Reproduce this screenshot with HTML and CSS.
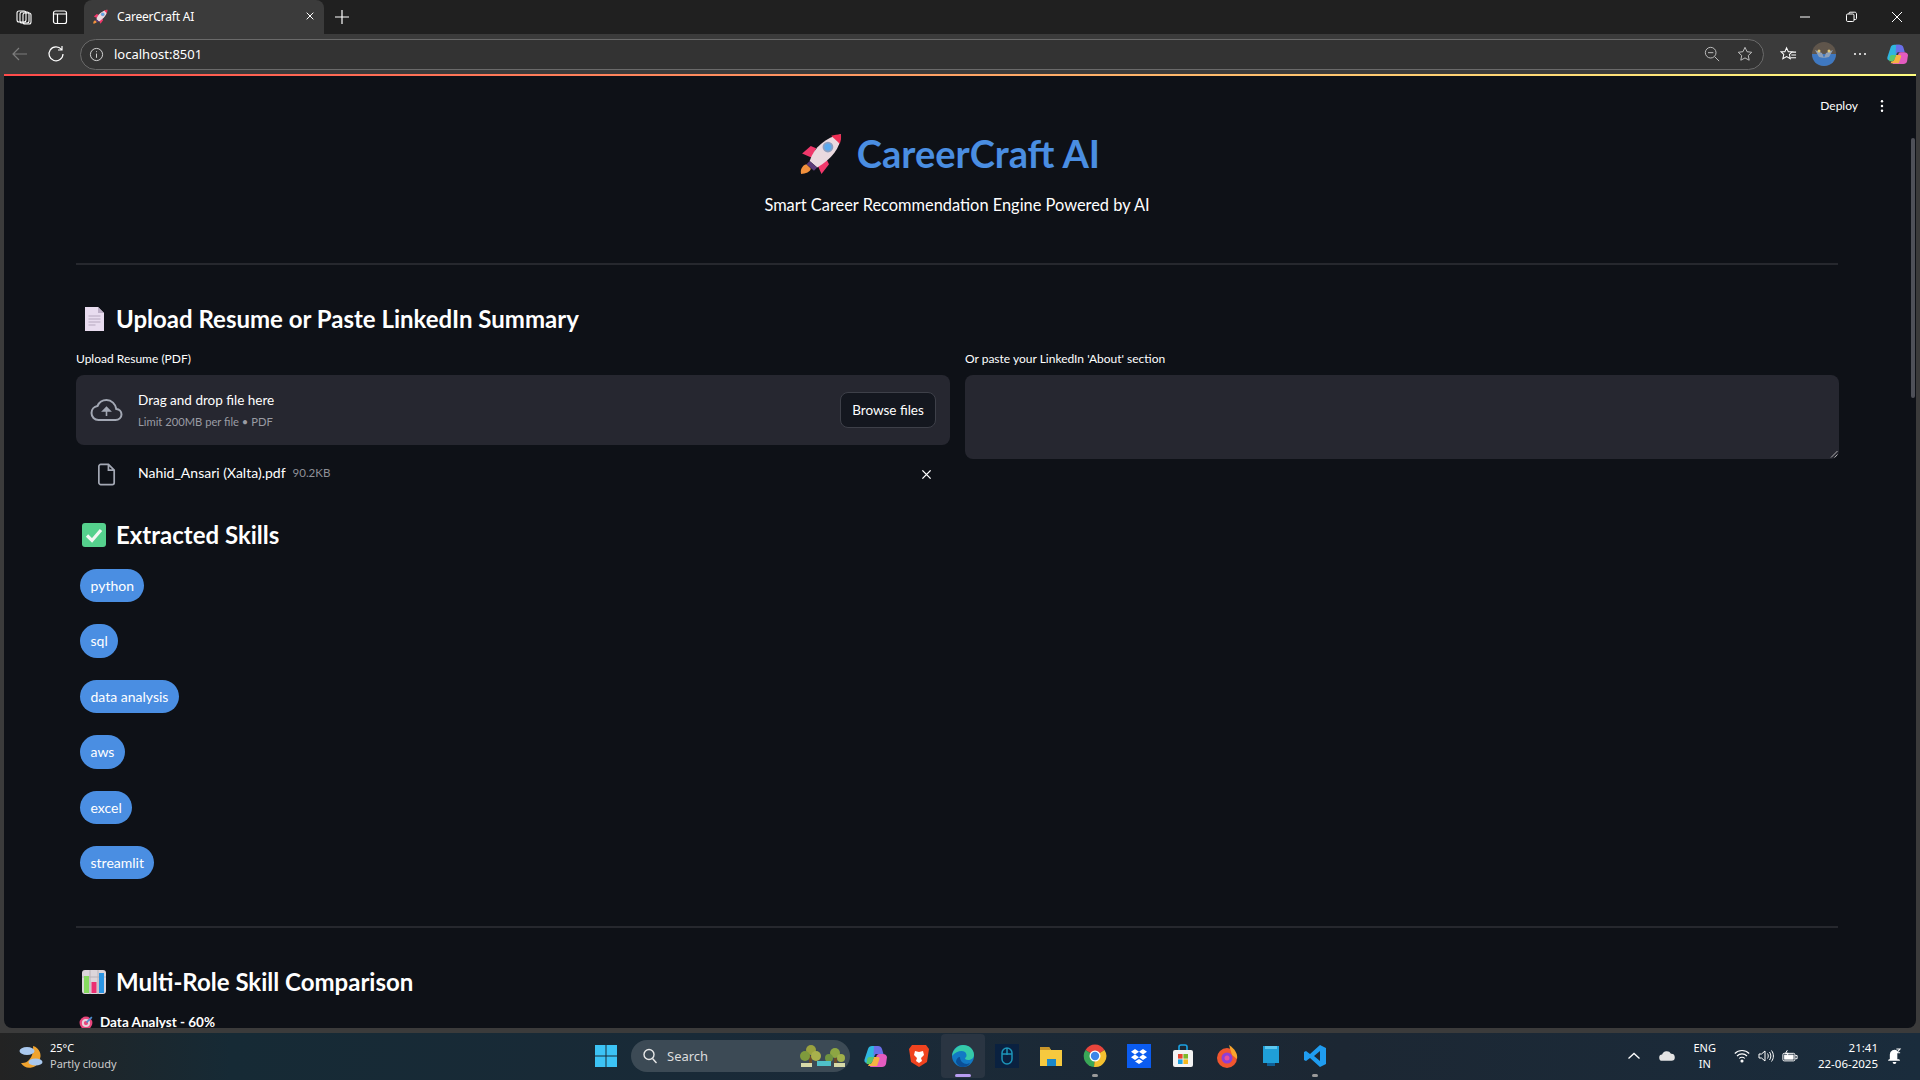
FILE: index.html
```html
<!DOCTYPE html>
<html lang="en">
<head>
  <meta charset="UTF-8" />
  <title>CareerCraft AI</title>
  <link rel="stylesheet" href="styles.css">
</head>
<body>
  <svg class="defs" width="0" height="0">
    <defs>
      <symbol id="rocket" viewBox="0 0 40 40">
        <path d="M1 39c-1-4 1-8 5-9l4 4c0 3-5 5-9 5z" fill="#f2913d"/>
        <path d="M10 13L2 20l9 4 4-9z" fill="#f0386b"/>
        <path d="M27 30l-7 9-5-11 9-4z" fill="#f0386b"/>
        <path d="M9 27C13 14 24 5 38 2c0 13-9 23-22 31z" fill="#ead9df"/>
        <path d="M29 3.500c3-1 6-1.500 9-1.500 .5 3 0 6-1 9z" fill="#ef2f55"/>
        <path d="M9 27l7 6-3 3-7-6z" fill="#5b3a78"/>
        <circle cx="26" cy="14" r="5" fill="#8d9fc0"/>
        <circle cx="26" cy="14" r="3.300" fill="#5aa9ee"/>
      </symbol>
    </defs>
  </svg>

  <div class="tabstrip">
    <div class="strip-left">
      <svg class="chrome-icon" viewBox="0 0 18 18" fill="none" stroke="#fff" stroke-width="1.1"><rect x="2" y="3" width="9" height="11" rx="2"/><rect x="5" y="4" width="9" height="11" rx="2"/><rect x="8" y="5" width="8" height="11" rx="2"/></svg>
      <svg class="chrome-icon" viewBox="0 0 18 18" fill="none" stroke="#fff" stroke-width="1.2"><rect x="2.500" y="3" width="13" height="12.500" rx="2"/><path d="M2.500 6h13M6.500 6v9.500"/></svg>
    </div>
    <div class="tab">
      <svg class="tab-favicon"><use href="#rocket"/></svg>
      <span class="tab-title">CareerCraft AI</span>
      <svg class="tab-close" viewBox="0 0 12 12" stroke="#fff" stroke-width="1.2"><path d="M2 2l8 8M10 2l-8 8"/></svg>
    </div>
    <svg class="new-tab" viewBox="0 0 14 14" stroke="#fff" stroke-width="1.2"><path d="M7 0v14M0 7h14"/></svg>
    <div class="window-btns">
      <svg viewBox="0 0 12 12" stroke="#fff" stroke-width="1"><path d="M1 6h10"/></svg>
      <svg viewBox="0 0 12 12" fill="none" stroke="#fff" stroke-width="1"><rect x="1.500" y="3" width="7.500" height="7.500" rx="1.200"/><path d="M4 3V2.200c0-.6.4-1 1-1h4.800c1 0 1.700.7 1.700 1.700V7.500c0 .6-.4 1-1 1H9"/></svg>
      <svg viewBox="0 0 12 12" stroke="#fff" stroke-width="1"><path d="M1 1l10 10M11 1L1 11"/></svg>
    </div>
  </div>

  <div class="toolbar">
    <svg class="nav-icon" viewBox="0 0 18 18" fill="none" stroke="#7d7d7d" stroke-width="1.200"><path d="M16 9H2M8 3L2 9l6 6"/></svg>
    <svg class="nav-icon" viewBox="0 0 18 18" fill="none" stroke="#fff" stroke-width="1.200"><path d="M14.500 4.500A7 7 0 1 0 16 9M15 1v4h-4"/></svg>
    <div class="address">
      <svg class="addr-info" viewBox="0 0 16 16" fill="none" stroke="#ddd" stroke-width="1"><circle cx="8" cy="8" r="6.500"/><path d="M8 7v4.500M8 4.500v1"/></svg>
      <span class="addr-url">localhost:8501</span>
      <svg class="addr-icon" viewBox="0 0 18 18" fill="none" stroke="#bdbdbd" stroke-width="1.100"><circle cx="7.500" cy="7.500" r="6"/><path d="M4.500 7.500h6M12 12l5 5"/></svg>
      <svg class="addr-icon" viewBox="0 0 18 18" fill="none" stroke="#bdbdbd" stroke-width="1.100"><path d="M9 1.500l2.300 4.900 5.300.7-3.900 3.600 1 5.300L9 13.400 4.300 16l1-5.300L1.400 7.100l5.300-.7z"/></svg>
    </div>
    <div class="toolbar-right">
      <svg class="tool-fav" viewBox="0 0 18 18" fill="none" stroke="#fff" stroke-width="1.100"><path d="M7 2l1.800 4h4.200L10 9l.9 4.500L7 11.200l-4 2.300L4 9 1 6h4.200zM13 6.500h4M12 9.500h5M11.500 12.500h5.500"/></svg>
      <svg class="avatar" viewBox="0 0 24 24"><circle cx="12" cy="12" r="12" fill="#5f554b"/><path d="M0 12h24c0 7-5 12-12 12S0 19 0 12z" fill="#3f78c0"/><path d="M3 8l7 3 2 5 2-5 7-3-4 7-5 1-5-1z" fill="#8e9fb5"/><circle cx="7" cy="9" r="1.500" fill="#e2c878"/><circle cx="17" cy="9" r="1.500" fill="#e2c878"/></svg>
      <svg class="tool-more" viewBox="0 0 14 4" fill="#fff"><circle cx="2" cy="2" r="1"/><circle cx="7" cy="2" r="1"/><circle cx="12" cy="2" r="1"/></svg>
      <svg class="tool-copilot" viewBox="0 0 24 24"><path d="M9 2h6l-5 14c-.7 2-2 3-4 3H4c-2 0-3-1.500-2.500-3.500L5 5c.5-2 2-3 4-3z" fill="#2fb6e0"/><path d="M11 2h4c2 0 3.500 1 4 3l1.500 5h-7c-1.500 0-2.500 1-3 2.500z" fill="#6a6fe8"/><path d="M8 20c2 0 3-1 3.500-2.500l2-5.500c.4-1 1-2 2.500-2H20c2 0 3.500 1 4 3l-1 7c-.5 2-2 3-4 3H7z" fill="#e45bc0"/><path d="M5 22h9l2.500-7c.4-1.200-.3-2-1.500-2H11l-2 5c-.6 1.500-1.500 2-3 2z" fill="#f5b342"/><path d="M4 16c0-1.500 1-3 2.500-3H11l-2 5c-.6 1.500-1.500 2-3 2H3.500z" fill="#59c96b"/></svg>
    </div>
  </div>

  <main class="app">
    <div class="top-gradient"></div>
    <div class="deploy-bar">
      <span class="deploy">Deploy</span>
      <svg class="kebab" viewBox="0 0 4 16" fill="#fff"><circle cx="2" cy="2.500" r="1.400"/><circle cx="2" cy="8" r="1.400"/><circle cx="2" cy="13.500" r="1.400"/></svg>
    </div>
    <div class="scrollbar"></div>

    <div class="content">
      <div class="hero">
        <h1 class="title">
          <svg class="title-rocket"><use href="#rocket"/></svg>
          <span>CareerCraft AI</span>
        </h1>
        <p class="subtitle">Smart Career Recommendation Engine Powered by AI</p>
      </div>
      <hr class="rule rule-first">

      <h2 class="heading heading-upload">
        <svg class="heading-icon" viewBox="0 0 26 26"><path d="M4 1h13l6 6v18H4z" fill="#e8dcef"/><path d="M17 1l6 6h-6z" fill="#bcaec6"/><path d="M7.500 10h12M7.500 13h12M7.500 16h12M7.500 19h7" stroke="#b5a8bf" stroke-width="1.200"/></svg>
        Upload Resume or Paste LinkedIn Summary
      </h2>

      <div class="columns">
        <div class="col">
          <label class="field-label">Upload Resume (PDF)</label>
          <div class="dropzone">
            <svg class="cloud" viewBox="0 0 32 24" fill="none" stroke="#a3a8b4" stroke-width="2"><path d="M8 22h17c3.500 0 6-2.500 6-5.500 0-3-2.300-5.300-5.200-5.500C25 6 21 2 16 2c-4 0-7.500 2.500-9 6C3.500 8.500 1 11.500 1 15c0 4 3 7 7 7z"/><path d="M16 18v-7M12.500 13l3.500-3.500 3.500 3.500z" fill="#a3a8b4" stroke-width="1.600"/></svg>
            <div class="drop-text">
              <div class="drop-title">Drag and drop file here</div>
              <div class="drop-hint">Limit 200MB per file • PDF</div>
            </div>
            <button class="browse">Browse files</button>
          </div>
          <div class="file-row">
            <svg class="file-icon" viewBox="0 0 18 24" fill="none" stroke="#a3a8b4" stroke-width="1.800"><path d="M2.500 1.500h8l6 6v13c0 1-.8 2-2 2h-12c-1 0-2-1-2-2V3.500c0-1 1-2 2-2zM10.500 1.500v6h6"/></svg>
            <span class="file-name">Nahid_Ansari (Xalta).pdf</span>
            <span class="file-size">90.2KB</span>
            <svg class="file-remove" viewBox="0 0 12 12" stroke="#fff" stroke-width="1.500"><path d="M1.500 1.500l9 9M10.500 1.500l-9 9"/></svg>
          </div>
        </div>
        <div class="col">
          <label class="field-label">Or paste your LinkedIn 'About' section</label>
          <div class="textarea">
            <svg class="grip" viewBox="0 0 8 8" stroke="#aaa" stroke-width="1"><path d="M7.500 1L1 7.500M7.500 4.500L4.500 7.500"/></svg>
          </div>
        </div>
      </div>

      <h2 class="heading heading-skills">
        <svg class="heading-icon" viewBox="0 0 26 26"><rect x="1" y="1" width="24" height="24" rx="3" fill="#55d18d"/><path d="M6 13.500l5 5L20 8" fill="none" stroke="#f2f7f3" stroke-width="3.200"/></svg>
        Extracted Skills
      </h2>
      <div class="skills">
        <div><span class="pill">python</span></div>
        <div><span class="pill">sql</span></div>
        <div><span class="pill">data analysis</span></div>
        <div><span class="pill">aws</span></div>
        <div><span class="pill">excel</span></div>
        <div><span class="pill">streamlit</span></div>
      </div>
      <hr class="rule rule-second">

      <h2 class="heading heading-compare">
        <svg class="heading-icon" viewBox="0 0 26 26"><rect x="1" y="1" width="24" height="24" rx="3" fill="#dcd5da"/><path d="M9 1v24M17 1v24M1 8h24" stroke="#b9b2b8" stroke-width="1"/><rect x="3" y="7" width="5" height="17" fill="#86d95f"/><rect x="10.500" y="13" width="5" height="11" fill="#ec2f72"/><rect x="18" y="4" width="5" height="20" fill="#2b95e3"/></svg>
        Multi-Role Skill Comparison
      </h2>
      <div class="role-line">
        <svg class="role-icon" viewBox="0 0 14 14"><circle cx="6.500" cy="7.500" r="6" fill="#e8467c"/><circle cx="6.500" cy="7.500" r="3.800" fill="#e7d5dc"/><circle cx="6.500" cy="7.500" r="2" fill="#e8467c"/><path d="M7 7l5-5" stroke="#4b8fd0" stroke-width="1.600"/></svg>
        <span>Data Analyst - 60%</span>
      </div>
    </div>
  </main>

  <footer class="taskbar">
    <div class="weather">
      <svg class="weather-icon" viewBox="0 0 26 26"><path d="M15 3a10 10 0 0 1 6 15 10 10 0 0 1-18 2c6 1 13-5 12-17z" fill="#f0a32e"/><ellipse cx="9" cy="8" rx="7.500" ry="4" fill="#a9c8ee"/><ellipse cx="17.500" cy="19" rx="7" ry="3.600" fill="#a9c8ee"/></svg>
      <div class="weather-text">
        <div>25°C</div>
        <div class="weather-sub">Partly cloudy</div>
      </div>
    </div>

    <div class="task-center">
      <svg class="task-icon" viewBox="0 0 24 24"><path d="M1 1h10.500v10.500H1zM12.500 1H23v10.500H12.500zM1 12.500h10.500V23H1zM12.500 12.500H23V23H12.500z" fill="#3cc3f5"/></svg>
      <div class="search">
        <svg class="search-icon" viewBox="0 0 16 16" fill="none" stroke="#e8e8e8" stroke-width="1.400"><circle cx="7" cy="6.500" r="5"/><path d="M10.500 10.500L14.500 15"/></svg>
        <span class="search-text">Search</span>
        <svg class="search-art" viewBox="0 0 46 24"><rect x="9" y="12" width="3" height="9" fill="#6b4a2a"/><rect x="34" y="14" width="3" height="7" fill="#6b4a2a"/><circle cx="11" cy="6" r="5" fill="#9aa23f"/><circle cx="5" cy="12" r="5" fill="#7f9a3c"/><circle cx="16" cy="12" r="5" fill="#a9b04c"/><circle cx="35" cy="9" r="5" fill="#8da643"/><circle cx="29" cy="14" r="4" fill="#6f9440"/><circle cx="41" cy="14" r="4" fill="#a0b04a"/><rect x="17" y="17" width="14" height="5" fill="#4fc0c8"/><path d="M1 19h11v4H1zM34 19h11v4H34z" fill="#d7d9a8"/></svg>
      </div>
      <div class="task-slot">
        <svg class="task-icon" viewBox="0 0 24 24"><path d="M9 2h6l-5 14c-.7 2-2 3-4 3H4c-2 0-3-1.500-2.500-3.500L5 5c.5-2 2-3 4-3z" fill="#2fb6e0"/><path d="M11 2h4c2 0 3.500 1 4 3l1.500 5h-7c-1.500 0-2.500 1-3 2.500z" fill="#6a6fe8"/><path d="M8 20c2 0 3-1 3.500-2.500l2-5.500c.4-1 1-2 2.500-2H20c2 0 3.500 1 4 3l-1 7c-.5 2-2 3-4 3H7z" fill="#e45bc0"/><path d="M5 22h9l2.500-7c.4-1.200-.3-2-1.500-2H11l-2 5c-.6 1.500-1.500 2-3 2z" fill="#f5b342"/><path d="M4 16c0-1.500 1-3 2.500-3H11l-2 5c-.6 1.500-1.500 2-3 2H3.500z" fill="#59c96b"/></svg>
      </div>
      <div class="task-slot">
        <svg class="task-icon" viewBox="0 0 24 24"><path d="M5 1h14l3 4-2 13-8 5-8-5L2 5z" fill="#f0431f"/><path d="M8 7l4 1 4-1 1 4-3 3 1 3-3 2-3-2 1-3-3-3z" fill="#fff"/></svg>
      </div>
      <div class="task-slot task-active">
        <svg class="task-icon" viewBox="0 0 24 24"><circle cx="12" cy="12" r="11" fill="#1279c4"/><path d="M1 12C2 5 7 1 12 1c6 0 11 4 11 10 0 3-3 5-6 5-2 0-3-1-3-2 2-1 2-4 0-6-3-2-9-1-13 4z" fill="#35c9a8"/><path d="M9 13c0 4 3 7 7 7l3-1c-2 3-5 4-7 4-3 0-6-2-7-5 0-3 2-5 4-5z" fill="#0b4f96"/></svg>
        <span class="active-mark"></span>
      </div>
      <div class="task-slot">
        <svg class="task-icon" viewBox="0 0 24 24"><rect width="24" height="24" fill="#0a2140"/><path d="M7 9a5 5 0 0 1 10 0v6a5 5 0 0 1-10 0zM12 4v7M7 10h10" fill="none" stroke="#1d94b8" stroke-width="1.500"/></svg>
      </div>
      <div class="task-slot">
        <svg class="task-icon" viewBox="0 0 24 24"><path d="M1 3h9l2 3h11v16H1z" fill="#f6c93f"/><path d="M1 3h9l2 3H1z" fill="#c9962a"/><rect x="8" y="15" width="9" height="7" fill="#1b88c9"/></svg>
      </div>
      <div class="task-slot">
        <svg class="task-icon" viewBox="0 0 24 24"><path d="M12 12L2.500 6A11 11 0 0 1 21.500 6z" fill="#e8453c"/><path d="M12 12l-9.500-6A11 11 0 0 0 11 23z" fill="#3aa757"/><path d="M12 12l9.500-6A11 11 0 0 1 11 23z" fill="#f5c02f"/><circle cx="12" cy="12" r="5.500" fill="#fff"/><circle cx="12" cy="12" r="4.200" fill="#3d85e8"/></svg>
        <span class="open-mark"></span>
      </div>
      <div class="task-slot">
        <svg class="task-icon" viewBox="0 0 24 24"><rect width="24" height="24" fill="#0b5cf0"/><path d="M8 5l4 2.700L8 10.500 4 7.700zM16 5l4 2.700-4 2.800-4-2.800zM8 10.500l4 2.700-4 2.800-4-2.800zM16 10.500l4 2.700-4 2.800-4-2.800zM12 15l4 2.500-4 2.500-4-2.500z" fill="#fff"/></svg>
      </div>
      <div class="task-slot">
        <svg class="task-icon" viewBox="0 0 24 24"><path d="M8 6V3c0-1 1-2 2-2h4c1 0 2 1 2 2v3" fill="none" stroke="#1ba1e2" stroke-width="1.600"/><rect x="2" y="6" width="20" height="17" rx="2" fill="#f3f3f3"/><rect x="7" y="10" width="4.600" height="4.600" fill="#e8432e"/><rect x="12.400" y="10" width="4.600" height="4.600" fill="#7db82a"/><rect x="7" y="15.400" width="4.600" height="4.600" fill="#1ba1e2"/><rect x="12.400" y="15.400" width="4.600" height="4.600" fill="#f5b81e"/></svg>
      </div>
      <div class="task-slot">
        <svg class="task-icon" viewBox="0 0 24 24"><circle cx="12" cy="14" r="10" fill="#f0562f"/><path d="M14 1c6 4 9 9 8 14l-5-4z" fill="#f9a52c"/><circle cx="12" cy="14" r="5.500" fill="#8d3fd6"/><circle cx="12" cy="14" r="2.500" fill="#e84f9a"/></svg>
      </div>
      <div class="task-slot">
        <svg class="task-icon" viewBox="0 0 24 24"><path d="M4 2h16v17H4z" fill="#1f9fd8"/><path d="M6 2h12v3H6z" fill="#5cc8f0"/><path d="M8 19h8v3H8z" fill="#0f5f96"/></svg>
      </div>
      <div class="task-slot">
        <svg class="task-icon" viewBox="0 0 24 24"><path d="M17 1l6 3v16l-6 3-10-9-4 3-2-1V8l2-1 4 3zM17 7l-6 5 6 5z" fill="#1f9cf0"/></svg>
        <span class="open-mark"></span>
      </div>
    </div>

    <div class="tray">
      <svg class="tray-icon" viewBox="0 0 14 14" fill="none" stroke="#fff" stroke-width="1.300"><path d="M1.500 9.500L7 4.500l5.500 5"/></svg>
      <svg class="tray-cloud" viewBox="0 0 18 12" fill="#e4e4e4"><path d="M4 12a3.500 3.500 0 0 1-.5-7A5.500 5.500 0 0 1 13.500 4 4 4 0 0 1 14 12z"/></svg>
      <div class="lang"><div>ENG</div><div>IN</div></div>
      <svg class="tray-icon" viewBox="0 0 16 14" fill="none" stroke="#fff" stroke-width="1.100"><path d="M.8 4.500a10 10 0 0 1 14.400 0M3 7a7 7 0 0 1 10 0M5.200 9.500a3.800 3.800 0 0 1 5.600 0"/><circle cx="8" cy="12" r="1" fill="#fff"/></svg>
      <svg class="tray-icon" viewBox="0 0 16 14" fill="none" stroke="#fff" stroke-width="1"><path d="M1 5h2.500L7 2v10L3.500 9H1zM9.500 4.500c1 1.500 1 3.500 0 5M11.500 3c1.800 2.300 1.800 5.700 0 8M13.500 1.500c2.500 3.300 2.500 7.700 0 11"/></svg>
      <svg class="tray-icon" viewBox="0 0 18 14" fill="none" stroke="#fff" stroke-width="1.100"><rect x="1" y="4" width="13.500" height="8.500" rx="1.500"/><rect x="3" y="6" width="9.500" height="4.500" fill="#fff"/><path d="M15 6.500h2v3.500h-2M6 .5L4 4h3L5.500 7" /></svg>
      <div class="clock"><div>21:41</div><div>22-06-2025</div></div>
      <svg class="tray-bell" viewBox="0 0 16 18" fill="#fff"><path d="M3 13V8a5 5 0 0 1 8-4v9h2l1 1.500H1L2 13zM6 16h4a2 2 0 0 1-4 0z"/><path d="M10 2h4l-3.500 4H14" fill="none" stroke="#fff" stroke-width="1.100"/></svg>
    </div>
  </footer>
</body>
</html>
```

FILE: styles.css
```css
html, body {
  margin: 0;
  height: 100%;
}

body {
  width: 1920px;
  height: 1080px;
  overflow: hidden;
  display: flex;
  flex-direction: column;
  background-color: #3b3b3b;
  color: white;
  font-family: "Noto Sans", sans-serif;
}

.defs {
  position: absolute;
}

/* Browser tab strip */
.tabstrip {
  height: 34px;
  flex: none;
  display: flex;
  align-items: center;
  background-color: #202020;
}

.strip-left {
  width: 84px;
  display: flex;
  align-items: center;
  gap: 18px;
  padding-left: 15px;
  box-sizing: border-box;
}

.chrome-icon {
  width: 18px;
  height: 18px;
}

.tab {
  width: 240px;
  height: 34px;
  box-sizing: border-box;
  display: flex;
  align-items: center;
  padding: 0 9px 2px 9px;
  background-color: #3b3b3b;
  border-radius: 8px 8px 0 0;
}

.tab-favicon {
  width: 15px;
  height: 15px;
  flex: none;
}

.tab-title {
  margin-left: 9px;
  font-size: 12px;
  letter-spacing: -0.2px;
  flex: 1;
}

.tab-close {
  width: 10px;
  height: 10px;
}

.new-tab {
  width: 14px;
  height: 14px;
  margin-left: 11px;
}

.window-btns {
  margin-left: auto;
  display: flex;
  gap: 34px;
  padding-right: 17px;
}

.window-btns svg {
  width: 12px;
  height: 12px;
}

/* Browser toolbar */
.toolbar {
  height: 40px;
  flex: none;
  display: flex;
  align-items: center;
  padding-left: 11px;
  box-sizing: border-box;
  background-color: #3b3b3b;
}

.nav-icon {
  width: 18px;
  height: 18px;
  margin-right: 18px;
}

.address {
  width: 1684px;
  height: 31px;
  margin-left: -3px;
  box-sizing: border-box;
  display: flex;
  align-items: center;
  padding: 0 10px 0 8px;
  background-color: #333;
  border: 1px solid #6a6a6a;
  border-radius: 16px;
}

.addr-info {
  width: 15px;
  height: 15px;
}

.addr-url {
  margin-left: 10px;
  font-size: 13px;
  flex: 1;
}

.addr-icon {
  width: 16px;
  height: 16px;
  margin-left: 17px;
}

.toolbar-right {
  display: flex;
  align-items: center;
  margin-left: 16px;
}

.tool-fav {
  width: 17px;
  height: 17px;
}

.avatar {
  width: 24px;
  height: 24px;
  margin-left: 15px;
}

.tool-more {
  width: 14px;
  height: 4px;
  margin-left: 17px;
}

.tool-copilot {
  width: 22px;
  height: 22px;
  margin-left: 19px;
}

/* Streamlit page */
.app {
  position: relative;
  flex: none;
  height: 954px;
  margin: 0 4px;
  overflow: hidden;
  background-color: #0e1117;
  border-radius: 0 0 8px 8px;
  font-family: "Lato", sans-serif;
}

.top-gradient {
  height: 2px;
  background: linear-gradient(90deg, #ff4b4b, #fffd80);
}

.deploy-bar {
  position: absolute;
  top: 24px;
  right: 32px;
  display: flex;
  align-items: center;
  gap: 22px;
}

.deploy {
  font-size: 12px;
}

.kebab {
  width: 4px;
  height: 14px;
}

.scrollbar {
  position: absolute;
  top: 64px;
  right: 1px;
  width: 4px;
  height: 260px;
  border-radius: 2px;
  background-color: #4e5058;
}

.content {
  padding: 0 78px 0 72px;
}

.hero {
  padding-top: 52px;
  text-align: center;
}

.title {
  margin: 0;
  display: flex;
  justify-content: center;
  align-items: center;
  gap: 14px;
  font-size: 38px;
  line-height: 50px;
  font-weight: 700;
  color: #4a8ee2;
  padding-right: 14px;
}

.title-rocket {
  width: 43px;
  height: 43px;
}

.subtitle {
  margin: 15px 0 0;
  font-size: 16.400px;
  line-height: 24px;
}

.rule {
  margin: 0;
  border: none;
  height: 2px;
  background-color: #26282e;
}

.rule-first {
  margin-top: 46px;
}

.heading {
  margin: 0;
  display: flex;
  align-items: center;
  gap: 9px;
  font-size: 24px;
  line-height: 34px;
  font-weight: 700;
  padding-left: 5px;
}

.heading-icon {
  width: 26px;
  height: 26px;
  flex: none;
}

.heading-upload {
  margin-top: 37px;
}

.columns {
  display: grid;
  grid-template-columns: 874px 874px;
  gap: 15px;
  margin-top: 15px;
}

.field-label {
  display: block;
  font-size: 12px;
  line-height: 16px;
}

.dropzone {
  height: 70px;
  margin-top: 8px;
  display: flex;
  align-items: center;
  padding: 0 14px 0 14px;
  box-sizing: border-box;
  background-color: #262730;
  border-radius: 8px;
}

.cloud {
  width: 33px;
  height: 24px;
  flex: none;
}

.drop-text {
  flex: 1;
  margin-left: 15px;
}

.drop-title {
  font-size: 13.500px;
  line-height: 20px;
}

.drop-hint {
  margin-top: 4px;
  font-size: 11.200px;
  line-height: 16px;
  color: #9a9ca4;
}

.browse {
  width: 96px;
  height: 36px;
  padding: 0;
  border: 1px solid #3e4049;
  border-radius: 8px;
  background-color: #14171f;
  color: white;
  font-family: inherit;
  font-size: 13.500px;
}

.file-row {
  display: flex;
  align-items: center;
  margin-top: 17px;
  padding-left: 22px;
  height: 25px;
}

.file-icon {
  width: 18px;
  height: 23px;
  flex: none;
}

.file-name {
  margin-left: 22px;
  font-size: 14px;
  position: relative;
  top: -2px;
}

.file-size {
  margin-left: 7px;
  font-size: 11.500px;
  color: #8e9097;
  position: relative;
  top: -2px;
}

.file-remove {
  width: 11px;
  height: 11px;
  margin-left: auto;
  margin-right: 18px;
}

.textarea {
  position: relative;
  height: 84px;
  margin-top: 8px;
  background-color: #262730;
  border-radius: 8px;
}

.grip {
  position: absolute;
  right: 1px;
  bottom: 1px;
  width: 8px;
  height: 8px;
}

.heading-skills {
  margin-top: 31px;
}

.skills {
  margin-top: 17px;
  display: flex;
  flex-direction: column;
  gap: 22px;
  padding-left: 4px;
}

.skills > div {
  display: flex;
}

.pill {
  height: 33.400px;
  line-height: 33px;
  padding: 0 10.500px;
  border-radius: 17px;
  background-color: #4a8ee2;
  font-size: 14px;
}

.rule-second {
  margin-top: 47px;
}

.heading-compare {
  margin-top: 37px;
}

.role-line {
  display: flex;
  align-items: center;
  gap: 6px;
  margin-top: 13px;
  padding-left: 3px;
  font-size: 13.500px;
  line-height: 20px;
  font-weight: 700;
}

.role-icon {
  width: 15px;
  height: 15px;
}

/* Windows taskbar */
.taskbar {
  position: relative;
  flex: none;
  height: 47px;
  margin-top: 5px;
  padding-bottom: 2px;
  box-sizing: border-box;
  display: flex;
  align-items: center;
  background: linear-gradient(90deg, #232323 0%, #162a35 12%, #1a2a38 45%, #1c2733 70%, #1a2c3c 100%);
}

.weather {
  display: flex;
  align-items: center;
  gap: 6px;
  width: 594px;
  padding-left: 18px;
  box-sizing: border-box;
}

.weather-icon {
  width: 26px;
  height: 26px;
}

.weather-text {
  font-size: 11px;
  line-height: 16px;
}

.weather-sub {
  color: #ccc;
}

.task-center {
  display: flex;
  align-items: center;
}

.task-icon {
  width: 24px;
  height: 24px;
  flex: none;
}

.search {
  width: 219px;
  height: 32px;
  margin: 0 3px 0 13px;
  box-sizing: border-box;
  display: flex;
  align-items: center;
  padding: 0 4px 0 11px;
  border-radius: 16px;
  background-color: #3c4a55;
}

.search-icon {
  width: 16px;
  height: 16px;
}

.search-text {
  flex: 1;
  margin-left: 9px;
  font-size: 13px;
  color: #ddd;
}

.search-art {
  width: 46px;
  height: 24px;
}

.task-slot {
  position: relative;
  width: 44px;
  height: 44px;
  display: flex;
  align-items: center;
  justify-content: center;
}

.task-active {
  background-color: #2a3542;
  border-radius: 4px;
}

.active-mark {
  position: absolute;
  bottom: 1px;
  left: 14px;
  width: 16px;
  height: 3px;
  border-radius: 2px;
  background-color: #b79cf0;
}

.open-mark {
  position: absolute;
  bottom: 1px;
  left: 19px;
  width: 6px;
  height: 3px;
  border-radius: 2px;
  background-color: #9a9a9a;
}

.tray {
  margin-left: auto;
  display: flex;
  align-items: center;
  padding-right: 18px;
  font-size: 11px;
}

.tray-icon {
  width: 16px;
  height: 14px;
  margin-left: 8px;
}

.tray-cloud {
  width: 16px;
  height: 11px;
  margin-left: 17px;
}

.lang {
  margin: 0 10px 0 18px;
  text-align: center;
  line-height: 16px;
}

.clock {
  margin-left: 20px;
  text-align: right;
  line-height: 16px;
  font-size: 11.500px;
}

.tray-bell {
  width: 15px;
  height: 17px;
  margin-left: 9px;
}
```
